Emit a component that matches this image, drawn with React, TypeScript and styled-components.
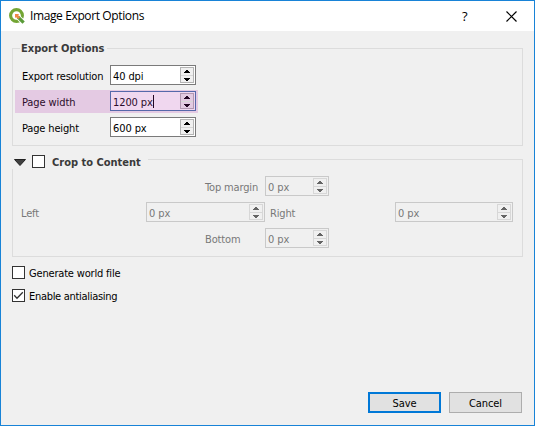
import React from "react";
import styled, { createGlobalStyle } from "styled-components";

const GlobalStyle = createGlobalStyle`
  * { box-sizing: border-box; }
  body { margin: 0; background: #f0f0f0; overflow: hidden; }
`;

const Dialog = styled.div`
  width: 535px;
  height: 426px;
  display: flex;
  flex-direction: column;
  border: 1px solid #1883d7;
  background: #f0f0f0;
  color: #000;
  font: 11px/14px "DejaVu Sans Condensed", "DejaVu Sans", sans-serif;
  font-stretch: condensed;
  white-space: nowrap;
`;

const TitleBar = styled.header`
  height: 30px;
  display: flex;
  align-items: center;
  padding: 0 17px 0 8px;
  background: #fff;
`;

const Title = styled.h1`
  flex: 1;
  margin: 0 0 0 5px;
  font: 400 12px/16px "Open Sans", sans-serif;
  letter-spacing: -0.38px;
`;

const HelpMark = styled.span`
  width: 8px;
  margin-right: 36px;
  font: 400 13px/16px "Open Sans", sans-serif;
`;

const Body = styled.main`
  flex: 1;
  display: flex;
  flex-direction: column;
  padding: 17px 12px 12px 11px;
`;

const Group = styled.section`
  height: 98px;
  width: 511px;
  border: 1px solid #dcdcdc;
  & + & {
    margin-top: 13px;
  }
`;

const GroupTitle = styled.h2`
  display: flex;
  align-items: center;
  width: 87px;
  height: 18px;
  margin: -9px 0 0 7px;
  padding-left: 1px;
  background: #f0f0f0;
  color: #3a3a3a;
  font-size: 11px;
  font-weight: 700;
`;

const CropTitle = styled(GroupTitle)`
  width: 136px;
  margin-left: -1px;
  padding-left: 2px;
`;

const Triangle = styled.svg`
  margin-top: 5px;
`;

const Text = styled.span<{ $spacing?: number }>`
  letter-spacing: ${(p) => p.$spacing ?? -0.1}px;
`;

const CropCaption = styled(Text)`
  margin-left: 7px;
  padding-top: 5px;
`;

const CheckText = styled(Text)`
  padding-top: 2px;
`;

const Fields = styled.div`
  display: flex;
  flex-direction: column;
  gap: 3px;
  padding: 6px 0 0 2px;
`;

const FieldRow = styled.div<{ $active?: boolean }>`
  display: flex;
  width: 183px;
  height: 23px;
  padding: 1px 0 0 7px;
  background: ${(p) => (p.$active ? "#e4cae3" : "transparent")};
  color: ${(p) => (p.$active ? "#2c0d2c" : "#000")};
`;

const FieldLabel = styled(Text)`
  width: 88px;
  padding-top: 5px;
`;

type Tone = "normal" | "active" | "disabled";
const tones = {
  normal: { border: "#7a7a7a", bg: "#fff", button: "#f0f0f0", edge: "#b4b4b4", arrow: "#000" },
  active: { border: "#5668aa", bg: "#f0d7ef", button: "#e3cae2", edge: "#b298b2", arrow: "#220522" },
  disabled: { border: "#c9c9c9", bg: "#f0f0f0", button: "#f0f0f0", edge: "#d7d7d7", arrow: "#646464" },
};

const SpinFrame = styled.div<{ $tone: Tone; $width: number }>`
  display: flex;
  width: ${(p) => p.$width}px;
  height: 20px;
  padding: 1px 1px 0 2px;
  border: 1px solid ${(p) => tones[p.$tone].border};
  background: ${(p) => tones[p.$tone].bg};
`;

const Value = styled(Text)`
  flex: 1;
  padding-top: 3px;
`;

const Caret = styled.span`
  display: inline-block;
  width: 1px;
  height: 13px;
  margin-top: -1px;
  background: #220522;
  vertical-align: top;
`;

const Stepper = styled.span<{ $tone: Tone }>`
  display: flex;
  flex-direction: column;
  width: 14px;
  height: 16px;
  border: 1px solid ${(p) => tones[p.$tone].edge};
  background: ${(p) => tones[p.$tone].button};
`;

const Step = styled.span<{ $tone: Tone }>`
  display: flex;
  height: 7px;
  padding-top: 2px;
  justify-content: center;
  & + & {
    height: 8px;
    border-top: 1px solid ${(p) => tones[p.$tone].edge};
  }
`;

function Spin({ value, width, tone = "normal" }: { value: string; width: number; tone?: Tone }) {
  const fill = tones[tone].arrow;
  return (
    <SpinFrame $tone={tone} $width={width}>
      <Value>
        {value}
        {tone === "active" && <Caret />}
      </Value>
      <Stepper $tone={tone}>
        <Step $tone={tone}>
          <svg width="6" height="3" shapeRendering="crispEdges" fill={fill}>
            <path d="M2 0h2v1h1v1h1v1H0V2h1V1h1z" />
          </svg>
        </Step>
        <Step $tone={tone}>
          <svg width="6" height="3" shapeRendering="crispEdges" fill={fill}>
            <path d="M0 0h6v1H5v1H4v1H2V2H1V1H0z" />
          </svg>
        </Step>
      </Stepper>
    </SpinFrame>
  );
}

const CropGrid = styled.div`
  display: grid;
  grid-template-columns: 125px 59px 60px 5px 60px 65px 118px;
  grid-template-rows: repeat(3, 20px);
  row-gap: 6px;
  padding: 7px 0 0 8px;
  color: #787878;
`;

const Cell = styled.div<{ $row: number; $col: number }>`
  grid-row: ${(p) => p.$row};
  grid-column: ${(p) => p.$col};
`;

const LabelCell = styled(Cell)`
  padding-top: 5px;
  letter-spacing: -0.15px;
`;

const Box = styled.span`
  display: flex;
  width: 13px;
  height: 13px;
  border: 1px solid #333;
  background: #fff;
`;

const TitleBox = styled(Box)`
  margin: 3px 0 0 6px;
`;

const Checks = styled.div`
  display: flex;
  flex-direction: column;
  gap: 10px;
  margin-top: 9px;
`;

const CheckRow = styled.label`
  display: flex;
  align-items: center;
  gap: 4px;
  height: 13px;
`;

const Footer = styled.footer`
  display: flex;
  justify-content: flex-end;
  gap: 8px;
  margin-top: auto;
`;

const Button = styled.button<{ $primary?: boolean }>`
  width: 73px;
  height: 21px;
  padding: 2px 0 0;
  border: ${(p) => (p.$primary ? "2px solid #0078d7" : "1px solid #adadad")};
  background: #e1e1e1;
  color: #000;
  font: inherit;
  letter-spacing: -0.1px;
`;

export default function App() {
  return (
    <>
      <GlobalStyle />
      <Dialog>
        <TitleBar>
          <svg width="16" height="16" viewBox="0 0 16 16">
            <circle cx="7.5" cy="7.5" r="5.9" fill="none" stroke="#73a534" strokeWidth="3.1" />
            <path d="M8 8l7.6 7.6" stroke="#fff" strokeWidth="5" />
            <path d="M8.6 8.6l6 6" stroke="#599b38" strokeWidth="3.2" />
            <path d="M6 6h4.2L9 7.2l2 2L9.2 11l-2-2L6 10z" fill="#ef8845" />
          </svg>
          <Title>Image Export Options</Title>
          <HelpMark>?</HelpMark>
          <svg width="11" height="11" viewBox="0 0 11 11">
            <path d="M.5.5l10 10M10.5.5l-10 10" stroke="#000" strokeWidth="1.2" />
          </svg>
        </TitleBar>
        <Body>
          <Group>
            <GroupTitle>
              <Text $spacing={0}>Export Options</Text>
            </GroupTitle>
            <Fields>
              <FieldRow>
                <FieldLabel $spacing={-0.2}>Export resolution</FieldLabel>
                <Spin value="40 dpi" width={86} />
              </FieldRow>
              <FieldRow $active>
                <FieldLabel>Page width</FieldLabel>
                <Spin value="1200 px" width={86} tone="active" />
              </FieldRow>
              <FieldRow>
                <FieldLabel $spacing={-0.15}>Page height</FieldLabel>
                <Spin value="600 px" width={86} />
              </FieldRow>
            </Fields>
          </Group>
          <Group>
            <CropTitle>
              <Triangle width="12" height="7">
                <path d="M.5.5h11L6 6.5z" fill="#404040" stroke="#222" />
              </Triangle>
              <TitleBox />
              <CropCaption $spacing={0}>Crop to Content</CropCaption>
            </CropTitle>
            <CropGrid>
              <LabelCell $row={1} $col={3}>Top margin</LabelCell>
              <Cell $row={1} $col={4}><Spin value="0 px" width={64} tone="disabled" /></Cell>
              <LabelCell $row={2} $col={1}>Left</LabelCell>
              <Cell $row={2} $col={2}><Spin value="0 px" width={119} tone="disabled" /></Cell>
              <LabelCell $row={2} $col={5}>Right</LabelCell>
              <Cell $row={2} $col={7}><Spin value="0 px" width={118} tone="disabled" /></Cell>
              <LabelCell $row={3} $col={3}>Bottom</LabelCell>
              <Cell $row={3} $col={4}><Spin value="0 px" width={64} tone="disabled" /></Cell>
            </CropGrid>
          </Group>
          <Checks>
            <CheckRow>
              <Box />
              <CheckText $spacing={-0.18}>Generate world file</CheckText>
            </CheckRow>
            <CheckRow>
              <Box>
                <svg width="11" height="11">
                  <path d="M1.2 5.2L4 8.2l5.8-6" fill="none" stroke="#333" strokeWidth="1.3" />
                </svg>
              </Box>
              <CheckText $spacing={-0.3}>Enable antialiasing</CheckText>
            </CheckRow>
          </Checks>
          <Footer>
            <Button $primary>Save</Button>
            <Button>Cancel</Button>
          </Footer>
        </Body>
      </Dialog>
    </>
  );
}
